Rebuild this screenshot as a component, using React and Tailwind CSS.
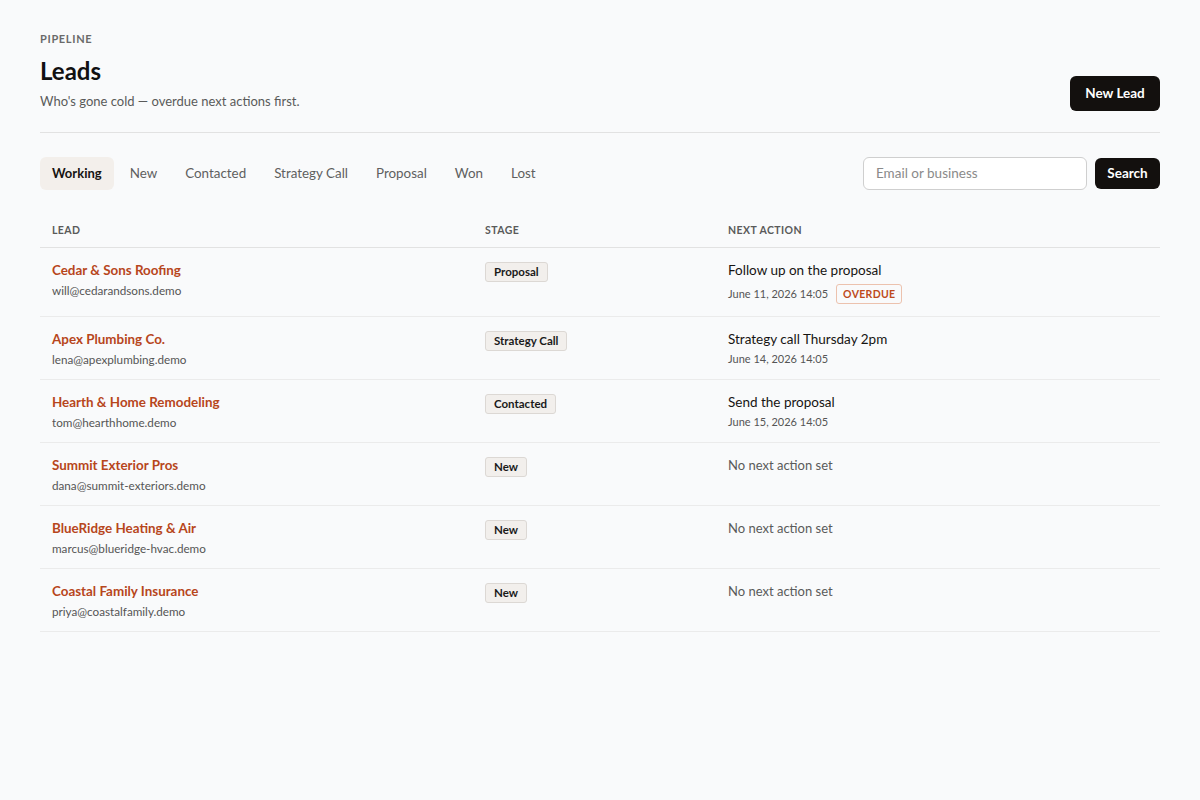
import React from "react";

const leads = [
  { name: "Cedar & Sons Roofing", email: "will@cedarandsons.demo", stage: "Proposal", action: "Follow up on the proposal", date: "June 11, 2026 14:05", overdue: true },
  { name: "Apex Plumbing Co.", email: "lena@apexplumbing.demo", stage: "Strategy Call", action: "Strategy call Thursday 2pm", date: "June 14, 2026 14:05" },
  { name: "Hearth & Home Remodeling", email: "tom@hearthhome.demo", stage: "Contacted", action: "Send the proposal", date: "June 15, 2026 14:05" },
  { name: "Summit Exterior Pros", email: "dana@summit-exteriors.demo", stage: "New" },
  { name: "BlueRidge Heating & Air", email: "marcus@blueridge-hvac.demo", stage: "New" },
  { name: "Coastal Family Insurance", email: "priya@coastalfamily.demo", stage: "New" },
];

const tabs = ["Working", "New", "Contacted", "Strategy Call", "Proposal", "Won", "Lost"];

export default function App() {
  return (
    <div className="min-h-[800px] bg-[#f9fafb] text-[#161412]" style={{ fontFamily: "Lato, 'Noto Sans', sans-serif" }}>
      <div className="mx-10 pt-[33px]">
        <div className="flex items-end justify-between pb-[21px] border-b border-[#e2e2e2]">
          <div>
            <div className="text-[11px] font-bold tracking-[0.06em] text-[#6a6a6a] leading-[12px]">PIPELINE</div>
            <h1 className="mt-[11px] text-[24px] font-bold leading-[30px] text-[#111]">Leads</h1>
            <p className="mt-[5px] text-[13px] leading-[20px] text-[#5a5a5a]">Who's gone cold — overdue next actions first.</p>
          </div>
          <button className="h-[35px] w-[90px] rounded-md bg-[#13100e] text-[13.5px] font-bold text-white">New Lead</button>
        </div>

        <div className="mt-6 flex items-center justify-between">
          <div className="flex items-center gap-[4px]">
            {tabs.map((t, i) => (
              <div
                key={t}
                className={
                  i === 0
                    ? "h-[33px] px-3 flex items-center rounded-md bg-[#f3efeb] text-[13px] font-bold text-[#161412]"
                    : "h-[33px] px-3 flex items-center text-[13.4px] text-[#5f5f5f]"
                }
              >
                {t}
              </div>
            ))}
          </div>
          <div className="flex items-center gap-2">
            <div className="h-[33px] w-[224px] rounded-md border border-[#cfcfcf] bg-white flex items-center px-3 text-[13.5px] text-[#8a8a8a]">Email or business</div>
            <button className="h-[31px] w-[65px] rounded-md bg-[#13100e] text-[13.5px] font-bold text-white">Search</button>
          </div>
        </div>

        <table className="mt-[33px] w-full border-collapse">
          <thead>
            <tr className="border-b border-[#e2e2e2]">
              <th className="w-[433px] px-3 pb-[8px] text-left text-[10.5px] font-bold tracking-[0.04em] text-[#5a5a5a]">LEAD</th>
              <th className="w-[243px] px-3 pb-[8px] text-left text-[10.5px] font-bold tracking-[0.04em] text-[#5a5a5a]">STAGE</th>
              <th className="px-3 pb-[8px] text-left text-[10.5px] font-bold tracking-[0.04em] text-[#5a5a5a]">NEXT ACTION</th>
            </tr>
          </thead>
          <tbody>
            {leads.map((l) => (
              <tr key={l.email} className="border-b border-[#ebebeb] align-top">
                <td className="px-3 pt-[13px] pb-[12px]">
                  <div className="text-[13.4px] font-bold leading-[18px] text-[#b7461c]">{l.name}</div>
                  <div className="mt-[3px] text-[11.7px] leading-[16px] text-[#555]">{l.email}</div>
                </td>
                <td className="px-3 pt-[14px] pb-[12px]">
                  <span className="block w-fit rounded-[3px] border border-[#dcd8d4] bg-[#f2efec] px-[8px] py-[2px] text-[11.5px] font-bold leading-[14px] text-[#1a1a1a]">{l.stage}</span>
                </td>
                <td className="px-3 pt-[13px] pb-[12px]">
                  {l.action ? (
                    <>
                      <div className="text-[13.5px] leading-[18px] text-[#161412]">{l.action}</div>
                      {l.overdue ? (
                        <div className="mt-[5px] flex items-center gap-2">
                          <span className="text-[11px] leading-[20px] text-[#555]">{l.date}</span>
                          <span className="rounded-[3px] border border-[#ecc2ae] px-[6px] py-[2px] text-[10.5px] font-bold tracking-[0.03em] leading-[14px] text-[#bd4a1c]">OVERDUE</span>
                        </div>
                      ) : (
                        <div className="mt-[3px] text-[11px] leading-[16px] text-[#555]">{l.date}</div>
                      )}
                    </>
                  ) : (
                    <div className="text-[13px] leading-[18px] text-[#5a5a5a]">No next action set</div>
                  )}
                </td>
              </tr>
            ))}
          </tbody>
        </table>
      </div>
    </div>
  );
}
